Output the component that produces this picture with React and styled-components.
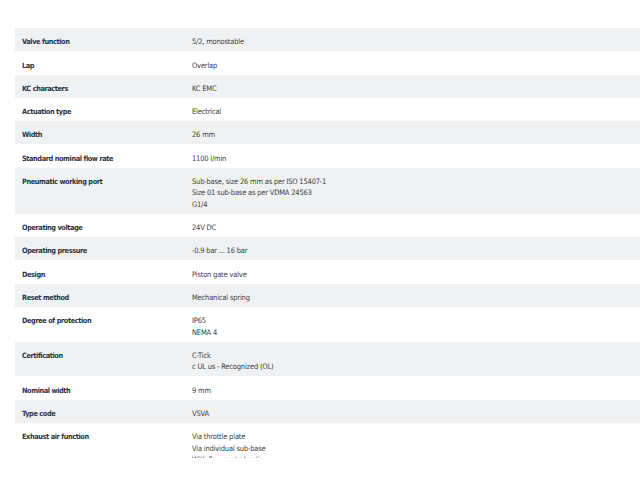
import React from 'react';
import styled, { createGlobalStyle } from 'styled-components';

const GlobalStyle = createGlobalStyle`
  html, body {
    margin: 0;
    padding: 0;
    background: #fff;
  }
`;

const Page = styled.div`
  padding: 28px 0 0 15px;
  height: 480px;
  box-sizing: border-box;
`;

const Table = styled.div`
  height: 430px;
  overflow: hidden;
  font-family: "DejaVu Sans Condensed", "Liberation Sans", sans-serif;
  font-size: 7.5px;
  line-height: 11.5px;
`;

const Row = styled.div`
  display: grid;
  grid-template-columns: 177px 1fr;
  align-items: baseline;
  padding: 8.3px 0 3.47px;
  background: ${p => (p.$shaded ? '#f0f1f3' : '#fff')};
`;

const Label = styled.div`
  padding-left: 7px;
  font-size: 7.3px;
  font-weight: 700;
  letter-spacing: -0.4px;
  color: #2c3440;
`;

const Value = styled.div`
  letter-spacing: -0.2px;
  color: #3d3d3d;
`;

const specs = [
  ['Valve function', ['5/2, monostable']],
  ['Lap', ['Overlap']],
  ['KC characters', ['KC EMC']],
  ['Actuation type', ['Electrical']],
  ['Width', ['26 mm']],
  ['Standard nominal flow rate', ['1100 l/min']],
  [
    'Pneumatic working port',
    ['Sub-base, size 26 mm as per ISO 15407-1', 'Size 01 sub-base as per VDMA 24563', 'G1/4'],
  ],
  ['Operating voltage', ['24V DC']],
  ['Operating pressure', ['-0.9 bar ... 16 bar']],
  ['Design', ['Piston gate valve']],
  ['Reset method', ['Mechanical spring']],
  ['Degree of protection', ['IP65', 'NEMA 4']],
  ['Certification', ['C-Tick', 'c UL us - Recognized (OL)']],
  ['Nominal width', ['9 mm']],
  ['Type code', ['VSVA']],
  ['Exhaust air function', ['Via throttle plate', 'Via individual sub-base', 'With flow control option']],
];

const App = () => (
  <>
    <GlobalStyle />
    <Page>
      <Table>
        {specs.map(([label, values], i) => (
          <Row key={label} $shaded={i % 2 === 0}>
            <Label>{label}</Label>
            <Value>
              {values.map(v => (
                <div key={v}>{v}</div>
              ))}
            </Value>
          </Row>
        ))}
      </Table>
    </Page>
  </>
);

export default App;
